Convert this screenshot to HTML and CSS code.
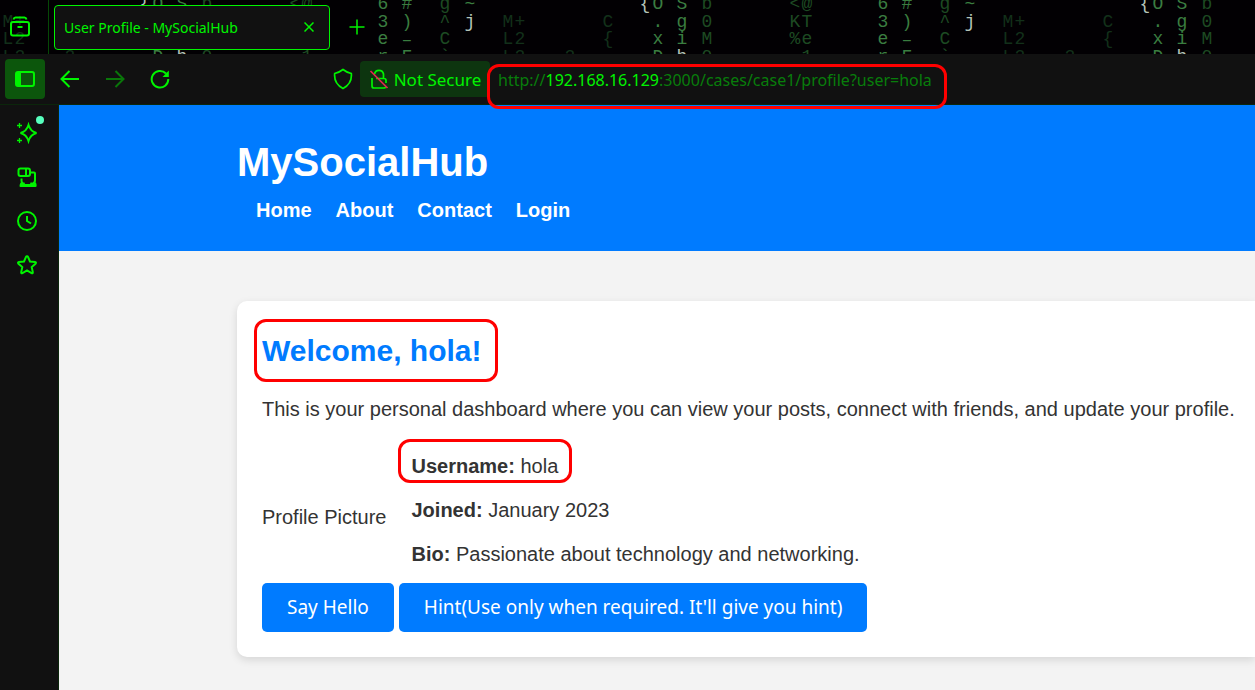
FILE: index.html
```html
<!DOCTYPE html>
<html lang="en">
<head>
<meta charset="utf-8">
<title>User Profile - MySocialHub</title>
<link rel="stylesheet" href="styles.css">
</head>
<body>
<div class="browser">
  <div class="tabbar">
    <svg class="rain" aria-hidden="true">
      <defs>
        <g id="glyphs">
          <g class="mid"><text x="383" y="9">6</text><text x="407" y="9">#</text><text x="383" y="27">3</text><text x="407" y="27">)</text><text x="383" y="44">e</text><text x="407" y="45">–</text><text x="383" y="62">r</text><text x="407" y="62">F</text><text x="658" y="9">O</text><text x="682" y="9">S</text><text x="658" y="27">.</text><text x="682" y="27">g</text><text x="658" y="44">x</text><text x="682" y="44">i</text><text x="658" y="62">D</text><text x="470" y="9">~</text></g>
          <g class="low"><text x="445" y="9">g</text><text x="445" y="27">^</text><text x="445" y="44">C</text><text x="445" y="62">`</text><text x="707" y="9">b</text><text x="707" y="27">0</text><text x="707" y="44">M</text><text x="707" y="62">0</text><text x="795" y="9">&lt;</text><text x="807" y="9">@</text><text x="795" y="27">K</text><text x="807" y="27">T</text><text x="795" y="44">%</text><text x="807" y="44">e</text><text x="807" y="62">1</text></g>
          <g class="dim"><text x="508" y="27">M</text><text x="520" y="27">+</text><text x="508" y="44">L</text><text x="520" y="44">2</text><text x="508" y="62">L</text><text x="520" y="62">2</text><text x="608" y="27">C</text><text x="608" y="44">{</text><text x="570" y="62">2</text></g>
          <g class="hot"><text x="470" y="27">j</text><text x="645" y="9">{</text><text x="682" y="62">h</text></g>
        </g>
      </defs>
      <use href="#glyphs" x="-500"/><use href="#glyphs"/><use href="#glyphs" x="500"/>
    </svg>
    <button class="recent" aria-label="Recent browsing">
      <svg width="22" height="22" viewBox="0 0 22 22"><path d="M4.500 3.500q.5-2 2-2h9q1.500 0 2 2"/><rect x="2" y="6" width="18" height="13.500" rx="2"/><path d="M8.500 11h5"/></svg>
    </button>
    <div class="tab">
      <span class="tab-title">User Profile - MySocialHub</span>
      <button class="close" aria-label="Close tab"><svg width="10" height="10" viewBox="0 0 10 10"><path d="M.5.5l9 9M9.500.5l-9 9"/></svg></button>
    </div>
    <button class="newtab" aria-label="New tab"><svg width="16" height="16" viewBox="0 0 16 16"><path d="M8 .5v15M.5 8h15"/></svg></button>
  </div>
  <div class="toolbar">
    <button class="sidebar-toggle" aria-label="Sidebar"><svg width="22" height="18" viewBox="0 0 22 18"><rect x="2" y="2" width="18" height="14" rx="2"/><path d="M2 2h5v14H2z" class="solid"/></svg></button>
    <div class="nav-buttons">
      <button aria-label="Back"><svg width="20" height="20" viewBox="0 0 20 20"><path d="M19 10H2M9.500 2L1.500 10l8 8"/></svg></button>
      <button class="faded" aria-label="Forward" disabled><svg width="20" height="20" viewBox="0 0 20 20"><path d="M1 10h17M10.500 2l8 8-8 8"/></svg></button>
      <button aria-label="Reload"><svg width="20" height="20" viewBox="0 0 20 20"><path d="M16 4.500A8.300 8.300 0 1 0 18.300 10"/><path class="solid" d="M18.800 1.500v6.500H12.500z"/></svg></button>
    </div>
    <div class="address">
      <button class="shield" aria-label="Tracking protection"><svg width="20" height="22" viewBox="0 0 20 22"><path d="M10 1.500Q13 4 18.300 5.500C19 12 16.500 17 10 20.500 3.500 17 1 12 1.700 5.500Q7 4 10 1.500z"/></svg></button>
      <button class="security"><svg width="20" height="22" viewBox="0 0 20 22"><path d="M3 10v8q0 2 2 2h10q1.200 0 1.800-1M7 10.500h8q2 0 2 2V15M5.500 6a4.600 4.600 0 0 1 9 0v4.500"/><path class="slash" d="M1.500 3L18.500 20"/></svg>Not Secure</button>
      <div class="url" role="textbox" aria-label="Address" tabindex="0">http://<span class="host">192.168.16.129</span>:3000/cases/case1/profile?user=hola</div>
    </div>
  </div>
  <div class="body">
    <aside class="sidebar">
      <button class="assistant" aria-label="Assistant"><svg width="22" height="22" viewBox="0 0 22 22"><path d="M12.500 3Q14.500 9.500 20.500 11 14.500 12.500 12.500 19 10.500 12.500 4.500 11 10.500 9.500 12.500 3z"/><path class="fine" d="M3.500 1v5M1 3.500h5M3.500 16v5M1 18.500h5"/></svg></button>
      <button aria-label="Synced tabs"><svg width="22" height="22" viewBox="0 0 22 22"><rect x="2.500" y="2.500" width="11.500" height="7.500" rx="2"/><path d="M10 3v7M15 6.500h3q1 0 1 1V14q0 3-2 3M5.500 12.500V15q0 1.500 1.500 2"/><path class="solid" d="M4.500 16.500h4l.5 1.500h5l.5-1.500H20q1.500 4.500-.5 4.500h-15q-2 0 0-4.500z"/></svg></button>
      <button aria-label="History"><svg width="22" height="22" viewBox="0 0 22 22"><circle cx="11" cy="11" r="9"/><path d="M11 6v5l4 2.500"/></svg></button>
      <button aria-label="Bookmarks"><svg width="22" height="22" viewBox="0 0 22 22"><path d="M11 2.200q.7 0 1 .7l2 4.600 5 .5q1.700.4.500 1.700l-3.800 3.400 1.100 5q.2 1.600-1.300 1L11 16.500l-4.500 2.600q-1.500.6-1.300-1l1.100-5L2.500 9.700Q1.300 8.400 3 8l5-.5 2-4.600q.3-.7 1-.7z"/></svg></button>
    </aside>
    <div class="page">
      <header class="site-header">
        <h1>MySocialHub</h1>
        <nav><a href="#">Home</a><a href="#">About</a><a href="#">Contact</a><a href="#">Login</a></nav>
      </header>
      <main class="card">
        <h2><span class="marked">Welcome, hola!</span></h2>
        <p class="intro">This is your personal dashboard where you can view your posts, connect with friends, and update your profile.</p>
        <section class="profile">
          <div class="picture">Profile Picture</div>
          <div class="details">
            <p><span class="marked"><strong>Username:</strong> hola</span></p>
            <p><strong>Joined:</strong> January 2023</p>
            <p><strong>Bio:</strong> Passionate about technology and networking.</p>
          </div>
        </section>
        <div class="actions"><button>Say Hello</button><button>Hint(Use only when required. It'll give you hint)</button></div>
      </main>
    </div>
  </div>
</div>
</body>
</html>
```
FILE: styles.css
```css
* { box-sizing: border-box; }
body { margin: 0; background: #111; font-family: "Liberation Sans", Arial, sans-serif; }
h1, h2, p { margin: 0; }
button { font: inherit; color: inherit; background: none; border: 0; padding: 0; display: flex; align-items: center; justify-content: center; }
svg { fill: none; stroke: currentColor; stroke-width: 2; flex-shrink: 0; }
.solid { fill: currentColor; stroke: none; }
.browser { min-height: 100vh; display: flex; flex-direction: column; overflow: hidden; color: #00f400; }

.tabbar { position: relative; height: 54px; display: flex; align-items: center; background: #020003; font-family: "Noto Sans", sans-serif; }
.rain { position: absolute; inset: 0; width: 100%; height: 100%; stroke: none; font-family: "Liberation Mono", monospace; font-size: 18px; text-anchor: middle; }
.rain .mid { fill: #3a7d40; }
.rain .low { fill: #1d4a22; }
.rain .dim { fill: #12301a; }
.rain .hot { fill: #b4c4b8; }
.recent, .tab, .newtab { position: relative; }
.recent { width: 49px; height: 54px; padding-right: 9px; border-right: 1px solid #064806; }
.tab { width: 276px; height: 45px; margin-left: 5px; padding: 0 15px 0 9px; display: flex; align-items: center; justify-content: space-between; background: #111; border: 1px solid #00f400; border-radius: 4px; font-size: 14px; }
.close svg, .newtab svg { stroke-width: 1.5; }
.newtab { width: 54px; height: 45px; }

.toolbar { height: 51px; padding: 0 5px; display: flex; align-items: center; background: #111; border-bottom: 1px solid #0b260b; font-family: "Noto Sans", sans-serif; font-size: 16px; }
.sidebar-toggle { width: 40px; height: 40px; background: #0c560c; border-radius: 4px; }
.nav-buttons { display: flex; gap: 25px; margin-left: 15px; }
.faded { opacity: .45; }
.address { flex: 1; display: flex; align-items: center; margin-left: 163px; }
.shield svg, .security svg { stroke-width: 1.700; }
.security { width: 130px; height: 36px; margin-left: 7px; gap: 5px; background: #0d350f; border-radius: 4px; font-size: 17px; white-space: nowrap; }
.slash { stroke: #e22850; }
.url { position: relative; margin-left: 8px; padding-top: 2px; color: #087d0b; white-space: nowrap; }
.host { color: #00f400; }
.url::after, .marked::after { content: ""; position: absolute; border: 3px solid #f00; border-radius: 12px; pointer-events: none; }
.url::after { inset: -3px -15px -18px -11px; z-index: 2; }

.body { flex: 1; display: flex; }
.sidebar { width: 59px; padding: 17px 5px 0 0; display: flex; flex-direction: column; align-items: center; gap: 22px; border-right: 1px solid #0b260b; }
.assistant { position: relative; }
.assistant::after { content: ""; position: absolute; top: -6px; right: -6px; width: 8px; height: 8px; border-radius: 4px; background: #57ffbd; }
.fine { stroke-width: 1.300; }
.page { flex: 1; min-width: 0; background: #f3f3f3; color: #333; font-size: 20px; line-height: 23px; }
.site-header { padding: 34px 178px 29px; background: #007bff; color: #fff; }
.site-header h1 { font-size: 40px; line-height: 46px; }
.site-header nav { display: flex; gap: 24px; margin-top: 14px; padding-left: 19px; }
.site-header a { color: inherit; font-weight: bold; text-decoration: none; }
.card { margin: 50px 0 0 178px; padding: 32px 0 25px 25px; background: #fff; border-radius: 10px 0 0 10px; box-shadow: 0 3px 8px rgba(0, 0, 0, .12); }
.card h2 { color: #007bff; font-size: 30px; line-height: 35px; }
.marked { position: relative; }
.marked::after { inset: -16px -14px -6px -14px; }
h2 .marked::after { inset: -15px -16px -15px -8px; }
.intro { margin-top: 30px; white-space: nowrap; }
.profile { display: flex; margin-top: 34px; gap: 25px; }
.picture { align-self: center; padding-top: 14px; }
.details { display: grid; gap: 21px; }
.actions { display: flex; gap: 5px; margin-top: 17px; }
.actions button { height: 49px; padding: 0 25px; background: #007bff; color: #fff; border-radius: 5px; font-family: "Noto Sans", sans-serif; font-size: 19px; white-space: nowrap; }
```
